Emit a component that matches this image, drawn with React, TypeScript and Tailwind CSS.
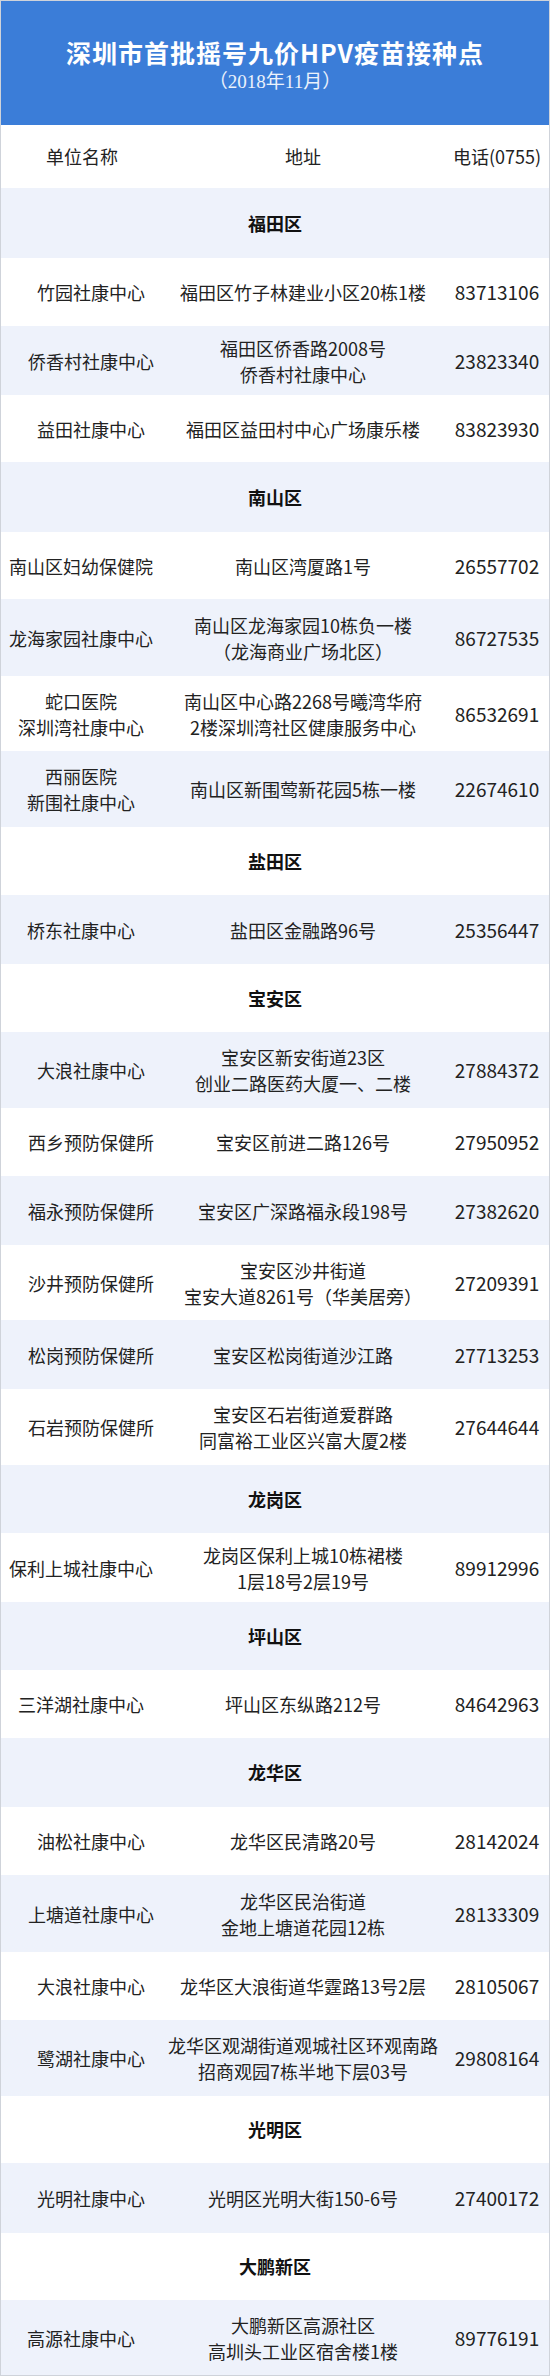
type Entry =
  | { district: string; h: number }
  | { name: string[]; addr: string[]; tel: string; h: number; shift?: boolean };

const rows: Entry[] = [
  { district: "福田区", h: 70 },
  { name: ["竹园社康中心"], addr: ["福田区竹子林建业小区20栋1楼"], tel: "83713106", h: 68 },
  { name: ["侨香村社康中心"], addr: ["福田区侨香路2008号", "侨香村社康中心"], tel: "23823340", h: 69 },
  { name: ["益田社康中心"], addr: ["福田区益田村中心广场康乐楼"], tel: "83823930", h: 67 },
  { district: "南山区", h: 70 },
  { name: ["南山区妇幼保健院"], addr: ["南山区湾厦路1号"], tel: "26557702", h: 67, shift: true },
  { name: ["龙海家园社康中心"], addr: ["南山区龙海家园10栋负一楼", "（龙海商业广场北区）"], tel: "86727535", h: 77, shift: true },
  { name: ["蛇口医院", "深圳湾社康中心"], addr: ["南山区中心路2268号曦湾华府", "2楼深圳湾社区健康服务中心"], tel: "86532691", h: 75, shift: true },
  { name: ["西丽医院", "新围社康中心"], addr: ["南山区新围莺新花园5栋一楼"], tel: "22674610", h: 76, shift: true },
  { district: "盐田区", h: 68 },
  { name: ["桥东社康中心"], addr: ["盐田区金融路96号"], tel: "25356447", h: 69, shift: true },
  { district: "宝安区", h: 68 },
  { name: ["大浪社康中心"], addr: ["宝安区新安街道23区", "创业二路医药大厦一、二楼"], tel: "27884372", h: 76 },
  { name: ["西乡预防保健所"], addr: ["宝安区前进二路126号"], tel: "27950952", h: 68 },
  { name: ["福永预防保健所"], addr: ["宝安区广深路福永段198号"], tel: "27382620", h: 69 },
  { name: ["沙井预防保健所"], addr: ["宝安区沙井街道", "宝安大道8261号（华美居旁）"], tel: "27209391", h: 75 },
  { name: ["松岗预防保健所"], addr: ["宝安区松岗街道沙江路"], tel: "27713253", h: 69 },
  { name: ["石岩预防保健所"], addr: ["宝安区石岩街道爱群路", "同富裕工业区兴富大厦2楼"], tel: "27644644", h: 76 },
  { district: "龙岗区", h: 68 },
  { name: ["保利上城社康中心"], addr: ["龙岗区保利上城10栋裙楼", "1层18号2层19号"], tel: "89912996", h: 69, shift: true },
  { district: "坪山区", h: 68 },
  { name: ["三洋湖社康中心"], addr: ["坪山区东纵路212号"], tel: "84642963", h: 68, shift: true },
  { district: "龙华区", h: 69 },
  { name: ["油松社康中心"], addr: ["龙华区民清路20号"], tel: "28142024", h: 68 },
  { name: ["上塘道社康中心"], addr: ["龙华区民治街道", "金地上塘道花园12栋"], tel: "28133309", h: 77 },
  { name: ["大浪社康中心"], addr: ["龙华区大浪街道华霆路13号2层"], tel: "28105067", h: 68 },
  { name: ["鹭湖社康中心"], addr: ["龙华区观湖街道观城社区环观南路", "招商观园7栋半地下层03号"], tel: "29808164", h: 76 },
  { district: "光明区", h: 67 },
  { name: ["光明社康中心"], addr: ["光明区光明大街150-6号"], tel: "27400172", h: 70 },
  { district: "大鹏新区", h: 67 },
  { name: ["高源社康中心"], addr: ["大鹏新区高源社区", "高圳头工业区宿舍楼1楼"], tel: "89776191", h: 75, shift: true },
];

const heights: Record<number, string> = {
  63: "h-[63px]",
  67: "h-[67px]",
  68: "h-[68px]",
  69: "h-[69px]",
  70: "h-[70px]",
  75: "h-[75px]",
  76: "h-[76px]",
  77: "h-[77px]",
};

const Lines = ({ items }: { items: string[] }) => (
  <>
    {items.map((t) => (
      <span key={t} className="whitespace-nowrap">
        {t}
      </span>
    ))}
  </>
);

export default function App() {
  return (
    <div className="w-[550px] border border-[#cfd3da] bg-white font-['Noto_Sans_CJK_SC',sans-serif] text-[#222]">
      <header className="flex h-[124px] flex-col items-center bg-[#3b7dd8] pt-[36px] text-white">
        <h1 className="text-[25px] leading-[30px] font-bold tracking-[1px]">深圳市首批摇号九价HPV疫苗接种点</h1>
        <p className="mt-[3px] font-['Liberation_Serif','Noto_Sans_CJK_SC',serif] text-[19px] leading-[24px] text-white/90">
          （2018年11月）
        </p>
      </header>

      <div className="flex h-[63px] items-center text-[18px]">
        <div className="flex w-[180px] justify-center pr-[18px]">单位名称</div>
        <div className="flex w-[244px] justify-center">地址</div>
        <div className="flex flex-1 justify-center pl-[20px]">电话(0755)</div>
      </div>

      {rows.map((r, i) => {
        const bg = i % 2 === 0 ? "bg-[#eef2fb]" : "bg-white";
        if ("district" in r) {
          return (
            <div
              key={r.district}
              className={`flex items-center justify-center text-[18px] font-bold text-[#111] ${bg} ${heights[r.h]}`}
            >
              {r.district}
            </div>
          );
        }
        return (
          <div key={r.tel} className={`flex items-center text-[18px] leading-[26px] ${bg} ${heights[r.h]}`}>
            <div className={`flex w-[180px] flex-col items-center ${r.shift ? "pr-[20px]" : ""}`}>
              <Lines items={r.name} />
            </div>
            <div className="flex w-[244px] flex-col items-center">
              <Lines items={r.addr} />
            </div>
            <div className="flex flex-1 justify-center pl-[20px] text-[19px]">{r.tel}</div>
          </div>
        );
      })}
    </div>
  );
}
